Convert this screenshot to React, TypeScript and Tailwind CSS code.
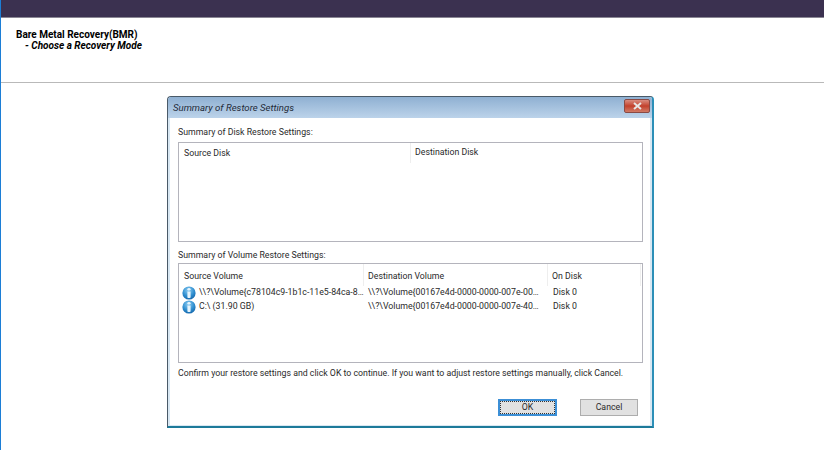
import React from "react";

const font = { fontFamily: 'Roboto, "Liberation Sans", sans-serif' };

const InfoIcon = () => (
  <svg width="14" height="14" viewBox="0 0 14 14" className="shrink-0">
    <defs>
      <radialGradient id="ball" cx="0.45" cy="0.3" r="0.8">
        <stop offset="0" stopColor="#8fcdf2" />
        <stop offset="0.55" stopColor="#2f8fd0" />
        <stop offset="1" stopColor="#0d5aa0" />
      </radialGradient>
    </defs>
    <circle cx="7" cy="7" r="6.6" fill="url(#ball)" />
    <ellipse cx="7" cy="3.2" rx="1.6" ry="1.2" fill="#e6f4fc" />
    <path d="M5.4 5.4 H8.6 V11.6 Q7 12.6 5.4 11.6 Z" fill="#e6f4fc" />
  </svg>
);

const VolumeRow = ({ source, dest }: { source: string; dest: string }) => (
  <div className="flex h-[14px] items-center">
    <div className="flex w-[185px] items-center gap-[3px] pl-[3px]">
      <InfoIcon />
      <span className="whitespace-nowrap">{source}</span>
    </div>
    <div className="w-[184px] whitespace-nowrap pl-[4px]">{dest}</div>
    <div className="pl-[5px]">Disk 0</div>
  </div>
);

export default function App() {
  return (
    <div className="h-[450px] w-[824px] overflow-hidden border-l border-l-[#1c7ed6] bg-white text-[8.75px] text-[#2a2a2a]" style={font}>
      <div className="h-[18px] border-b border-b-[#8a8794] bg-[#3b3150]" />
      <div className="h-[65px] border-b border-b-[#b9b9b9] pl-[15px] pt-[11px] text-[10px] font-bold leading-[11px] text-black">
        <div>Bare Metal Recovery(BMR)</div>
        <div className="pl-[9px] italic">- Choose a Recovery Mode</div>
      </div>

      <div className="ml-[166px] mt-[13px] flex h-[332px] w-[487px] flex-col rounded-t-[4px] border border-[#4a5a68] border-b-2 border-b-[#1d7a9a] border-r-2 border-r-[#2c8fb8] bg-[#d9e8f3]">
        <div className="flex h-[21px] shrink-0 items-start justify-between rounded-t-[3px] bg-gradient-to-b from-[#8fb0d2] to-[#bcd3ea] pl-[5px]">
          <span className="pt-[4px] text-[9.6px] italic text-[#1f2a38]">Summary of Restore Settings</span>
          <div className="mr-[2px] mt-[2px] flex h-[14px] w-[26px] items-center justify-center rounded-[2px] border border-[#8a4a44] bg-gradient-to-b from-[#d98c80] via-[#c2402c] to-[#d07a66]">
            <svg width="9" height="8" viewBox="0 0 9 8">
              <path d="M1 1 L8 7 M8 1 L1 7" stroke="#e8e8e8" strokeWidth="2" />
            </svg>
          </div>
        </div>

        <div className="mx-[2px] mb-[1px] flex flex-1 flex-col bg-white pl-[8px] pr-[7px]">
          <div className="mt-[7px] h-[14px] leading-[14px]">Summary of Disk Restore Settings:</div>
          <div className="mt-[3px] h-[100px] border border-[#b4b4bc]">
            <div className="flex h-[20px] items-center">
              <div className="h-full w-[232px] border-r border-r-[#eeeeee] pl-[5px] leading-[20px]">Source Disk</div>
              <div className="pl-[4px]">Destination Disk</div>
            </div>
          </div>

          <div className="mt-[6px] h-[14px] leading-[14px]">Summary of Volume Restore Settings:</div>
          <div className="mt-[1px] h-[100px] border border-[#b4b4bc]">
            <div className="flex h-[22px] items-center">
              <div className="h-full w-[185px] border-r border-r-[#eeeeee] pl-[5px] pt-[1px] leading-[22px]">Source Volume</div>
              <div className="h-full w-[184px] border-r border-r-[#eeeeee] pl-[4px] pt-[1px] leading-[22px]">Destination Volume</div>
              <div className="h-full w-[93px] border-r border-r-[#eeeeee] pl-[4px] pt-[1px] leading-[22px]">On Disk</div>
            </div>
            <div>
              <VolumeRow source="\\?\Volume{c78104c9-1b1c-11e5-84ca-8…" dest="\\?\Volume{00167e4d-0000-0000-007e-00…" />
              <VolumeRow source="C:\ (31.90 GB)" dest="\\?\Volume{00167e4d-0000-0000-007e-40…" />
            </div>
          </div>

          <div className="mt-[3px] h-[14px] whitespace-nowrap leading-[14px]">
            Confirm your restore settings and click OK to continue. If you want to adjust restore settings manually, click Cancel.
          </div>

          <div className="mt-[19px] flex justify-end gap-[23px] pr-[5px]">
            <button className="flex h-[17px] w-[59px] items-center justify-center border-2 border-[#3c8fd6] bg-[#e1e1e1] outline-1 -outline-offset-3 outline-dotted outline-[#333333]">OK</button>
            <button className="flex h-[17px] w-[58px] items-center justify-center border border-[#adadad] bg-[#e1e1e1]">Cancel</button>
          </div>
        </div>
      </div>
    </div>
  );
}
